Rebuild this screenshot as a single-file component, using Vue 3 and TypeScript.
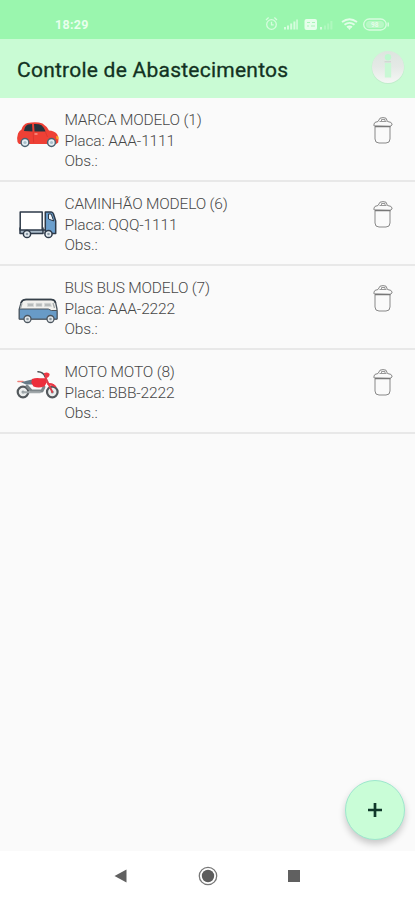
<script setup lang="ts">
interface Vehicle {
  id: number
  kind: 'car' | 'truck' | 'bus' | 'moto'
  name: string
  plate: string
}

const vehicles: Vehicle[] = [
  { id: 1, kind: 'car', name: 'MARCA MODELO', plate: 'AAA-1111' },
  { id: 6, kind: 'truck', name: 'CAMINHÃO MODELO', plate: 'QQQ-1111' },
  { id: 7, kind: 'bus', name: 'BUS BUS MODELO', plate: 'AAA-2222' },
  { id: 8, kind: 'moto', name: 'MOTO MOTO', plate: 'BBB-2222' },
]
</script>

<template>
  <div class="screen">
    <div class="status">
      <span class="clock">18:29</span>
      <svg class="status-icons" width="130" height="20" viewBox="0 0 130 20" fill="none">
        <g stroke="#d6fcde" stroke-width="1.3">
          <circle cx="6.5" cy="10.5" r="4.8" />
          <path d="M6.5 7.8v3h2.2M1 6l2.6-2.4M12 6L9.4 3.6" />
        </g>
        <g fill="#d6fcde">
          <path d="M19 13h2v2.500h-2zM22 11.500h2v4h-2zM25.200 9.500h2v6h-2zM28.400 7.500h2v8h-2zM31.300 5.500h1.500v10h-1.500z" />
          <rect x="39.500" y="5" width="12.500" height="11" rx="2" fill="#e6feeb" />
          <path d="M55 13h2v2.500h-2z" />
          <path d="M59 11.500h2v4h-2zM62.200 9.500h2v6h-2zM65.400 7h2v8.500h-2z" opacity=".35" />
        </g>
        <path d="M42 8.500h3M47 8.500h3M42 12h2M46 12h4" stroke="#a9f6b9" stroke-width="1.200" />
        <g stroke="#e2fde8" stroke-width="1.900">
          <path d="M77 8q7.500-5.500 15 0M79.500 10.800q5-3.800 10 0M82 13.300q2.500-1.900 5 0" />
        </g>
        <path d="M82.500 13.200h4l-2 2.800z" fill="#e2fde8" />
        <rect x="98.700" y="5" width="22.500" height="11" rx="5.500" stroke="#d9fce0" stroke-width="1.300" />
        <rect x="101" y="7" width="18" height="7" rx="3.500" fill="#b8f8c5" />
        <path d="M123.200 8.500v4" stroke="#d9fce0" stroke-width="1.500" />
        <text x="109.800" y="13" text-anchor="middle" class="battery">98</text>
      </svg>
    </div>

    <header class="bar">
      <h1>Controle de Abastecimentos</h1>
      <button class="info" aria-label="Info">
        <svg width="36" height="36" viewBox="0 0 36 36">
          <defs>
            <linearGradient id="metal" x1="0" y1="0" x2="0" y2="1">
              <stop offset="0" stop-color="#dde5df" />
              <stop offset=".5" stop-color="#e5e9e6" />
              <stop offset="1" stop-color="#f5f7f5" />
            </linearGradient>
          </defs>
          <circle cx="18" cy="18.700" r="16.300" fill="#b9e2c5" opacity=".55" />
          <circle cx="18" cy="18" r="16" fill="url(#metal)" />
          <circle cx="18" cy="8.300" r="3.200" fill="#bdf9cf" />
          <path d="M14.800 14h6.400v14.500h-6.400z" fill="#c9f8d5" />
          <path d="M14.500 12.800h6.500" stroke="#cad3cc" stroke-width="1" />
        </svg>
      </button>
    </header>

    <main class="list">
      <article v-for="v in vehicles" :key="v.id" class="row">
        <svg class="vehicle" width="48" height="82" viewBox="14 0 48 82">
          <g v-if="v.kind === 'car'">
            <path d="M17.500 44q-1-4 .5-8.500 1-2.500 3.500-4 1.500-5.500 6-6.500 9-1.700 15 .500 4 2.500 6.500 7 5 .300 8 3.500 2 3 1.200 8.500l-2 1.500H19z" fill="#ee4035" />
            <path d="M24 33q.7-5 3.800-6.400l4.200-.5.500 7.400zM34 26q5-.3 7.600 1.300 2.500 2.200 4 6.200H34.500z" fill="#26343e" />
            <path d="M33.200 33.500l.4 11M45.500 34l2 5" stroke="#d6322c" stroke-width=".7" fill="none" />
            <path d="M34.500 36h3" stroke="#ffc1b5" />
            <path d="M56 38l2.500.500v3l-2-.500z" fill="#f8a527" />
            <g fill="#e4edf2" stroke="#4c6270" stroke-width="1.500">
              <circle cx="25" cy="44.500" r="3.900" /><circle cx="51.500" cy="44.500" r="3.900" />
            </g>
            <g fill="#a9bfcb"><circle cx="25" cy="44.500" r="1.600" /><circle cx="51.500" cy="44.500" r="1.600" /></g>
          </g>

          <g v-else-if="v.kind === 'truck'" stroke="#2e3a49" stroke-width="1.500" stroke-linejoin="round">
            <path d="M20 46h23v5.500H20z" fill="#a9bac8" />
            <path d="M20.200 30h22v18h-22z" fill="#fff" />
            <path d="M45.300 30h6q1.500 0 2.200 2l2.200 7v12.500H45.300z" fill="#6b9fcd" />
            <path d="M48.500 32h2.700l2.500 7-5.200-2z" fill="#f2f7fb" stroke-width="1" />
            <path d="M42 48h3.500" />
            <circle cx="27" cy="52" r="3.600" fill="#e7eef3" /><circle cx="48.500" cy="52" r="3.600" fill="#e7eef3" />
            <g fill="#8b9aa6" stroke="none"><circle cx="27" cy="52" r="1.300" /><circle cx="48.500" cy="52" r="1.300" /></g>
          </g>

          <g v-else-if="v.kind === 'bus'" stroke="#4b555e" stroke-width="1.300" stroke-linejoin="round">
            <path d="M19.300 53V43l1.700-6q1.200-3.500 5-3.500h25q3.800 0 4.700 3.500l1.300 6v10z" fill="#f1f1ee" />
            <path d="M19.300 43h29l3 1.500h5.700V53H19.300z" fill="#689bc7" stroke-width="1" />
            <path d="M21 37q1.200-3.500 5-3.500h25q3.800 0 4.500 3.500" fill="none" stroke="#36404a" stroke-width="1.700" />
            <path d="M27.500 37.300h6v3.200h-6zM36 37.300h6v3.200h-6zM44.500 37.300h6l1 3.200h-7z" fill="#b7bbbb" stroke="#d6d9d8" stroke-width=".7" />
            <path d="M20.500 42.200l1.500-5M53 37l1.500 5" stroke="#a2a8aa" />
            <circle cx="27.500" cy="53" r="3.500" fill="#e5e9ec" /><circle cx="50.500" cy="53" r="3.500" fill="#e5e9ec" />
            <g fill="#8b989f" stroke="none"><circle cx="27.500" cy="53" r="1.300" /><circle cx="50.500" cy="53" r="1.300" /></g>
          </g>

          <g v-else fill="none" stroke-linecap="round" stroke-linejoin="round">
            <circle cx="23" cy="42" r="5.300" stroke="#53585c" stroke-width="2.200" fill="#eceeee" />
            <circle cx="52.300" cy="42" r="5.300" stroke="#53585c" stroke-width="2.200" fill="#eceeee" />
            <circle cx="23" cy="42" r="1.500" fill="#8c9499" /><circle cx="52.300" cy="42" r="1.500" fill="#8c9499" />
            <path d="M27 36l4.500 5h10.500l2-4" stroke="#7d868a" stroke-width="2.900" />
            <path d="M23 42.200h17" stroke="#a1a8ab" stroke-width="1.900" />
            <path d="M18 31.500h5" stroke="#ef7f79" stroke-width="1.600" />
            <path d="M21 32.200q6-1.500 11-2.700l2.500 5H26z" fill="#657986" />
            <path d="M32 29q4-1.600 8-.8l6 .1 1 4-2.500 4q-5.500 2.300-11 .300l-2.200-3.800z" fill="#ec2f3c" />
            <path d="M45.500 27.500L52.300 42" stroke="#db3e49" stroke-width="1.800" />
            <path d="M47.500 33.800q6-1.100 8.500 3l-4-1.300z" fill="#ed3543" stroke="#ed3543" />
            <path d="M45 26.500q-1.500-4.500-7-4.800" stroke="#4a5054" stroke-width="1.600" />
            <path d="M43.700 23.200q4.300-1.800 6 .8-.5 4-4 4z" fill="#ef3744" />
          </g>
        </svg>

        <div class="details">
          <div class="name">{{ v.name }} ({{ v.id }})</div>
          <div>Placa: {{ v.plate }}</div>
          <div>Obs.:</div>
        </div>

        <button class="trash" aria-label="Excluir">
          <svg width="22" height="30" viewBox="0 0 22 30" fill="none" stroke="#888" stroke-width="1">
            <path d="M3 11v12q0 4 4 4h7q4 0 4-4V11" />
            <path d="M2 10V8q0-2 4-2.500L8 2.200q3-1.200 6 0l1.500 3.300Q20 6 20 8v1l-2 1.500z" />
            <path d="M3 10.500h15.500" stroke="#777" stroke-width="1.500" />
            <path d="M7.500 5.500h7M9.500 5v-1.500h3.500V5" stroke="#999" />
          </svg>
        </button>
      </article>
    </main>

    <div class="action-area">
      <button class="fab" aria-label="Adicionar">
        <svg width="16" height="16" viewBox="0 0 16 16"><path d="M8 1v14M1 8h14" stroke="#10382a" stroke-width="2.700" /></svg>
      </button>
    </div>

    <nav class="nav">
      <svg width="14" height="14" viewBox="0 0 14 14"><path d="M.5 7L12.500.5v13z" fill="#606060" /></svg>
      <svg width="20" height="20" viewBox="0 0 20 20">
        <circle cx="10" cy="10" r="8.700" fill="none" stroke="#777" stroke-width="1.300" />
        <circle cx="10" cy="10" r="6.200" fill="#5c5c5c" />
      </svg>
      <svg width="14" height="14" viewBox="0 0 14 14"><path d="M1 1h12v12H1z" fill="#606060" /></svg>
    </nav>
  </div>
</template>

<style>
body {
  margin: 0;
}
</style>

<style scoped>
.screen {
  width: 415px;
  height: 900px;
  display: flex;
  flex-direction: column;
  overflow: hidden;
  background: #fafafa;
  font-family: Roboto, "Liberation Sans", sans-serif;
}
button {
  padding: 0;
  border: 0;
  background: none;
}
svg {
  display: block;
  flex: none;
}
.status {
  height: 39px;
  flex: none;
  box-sizing: border-box;
  display: flex;
  align-items: flex-start;
  justify-content: space-between;
  padding: 14px 20px 0 55px;
  background: #9af6ae;
}
.clock {
  color: #e8ffed;
  font-size: 12.5px;
  font-weight: 700;
  line-height: 21px;
  letter-spacing: 0.3px;
}
.battery {
  fill: #e6fdea;
  font-size: 6.5px;
  font-weight: 700;
}
.bar {
  height: 59px;
  flex: none;
  box-sizing: border-box;
  display: flex;
  align-items: flex-start;
  justify-content: space-between;
  padding: 10px 9px 0 17px;
  background: #c9fbd4;
}
h1 {
  margin: 0;
  color: #123222;
  font-size: 21px;
  font-weight: 400;
  line-height: 43px;
  letter-spacing: 0.24px;
  white-space: nowrap;
  -webkit-text-stroke: 0.3px #123222;
}
.row {
  height: 84px;
  box-sizing: border-box;
  display: flex;
  padding: 0 21px 0 14px;
  border-bottom: 2px solid #e8e8e8;
}
.details {
  flex: 1;
  padding: 12px 0 0 2.5px;
  color: #484848;
  font-size: 15.5px;
  font-weight: 300;
  line-height: 20.5px;
  letter-spacing: -0.14px;
  white-space: nowrap;
}
.name {
  letter-spacing: -0.19px;
}
.trash {
  align-self: flex-start;
  margin-top: 18px;
}
.action-area {
  flex: 1;
  display: flex;
  align-items: flex-end;
  justify-content: flex-end;
  padding: 0 10px 11px 0;
}
.fab {
  width: 60px;
  height: 60px;
  box-sizing: border-box;
  display: flex;
  align-items: center;
  justify-content: center;
  border: 1px solid #9de8cd;
  border-radius: 50%;
  background: #c9fdd7;
  box-shadow: 0 4px 7px rgba(0, 0, 0, 0.2);
}
.nav {
  height: 49px;
  flex: none;
  box-sizing: border-box;
  display: flex;
  align-items: center;
  justify-content: space-between;
  padding: 0 114px;
  background: #fff;
}
</style>
